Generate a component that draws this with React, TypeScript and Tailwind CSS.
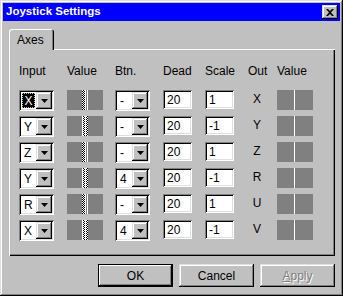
const rows = [
  { input: 'X', btn: '-', dead: '20', scale: '1', out: 'X', strip: 'a' },
  { input: 'Y', btn: '-', dead: '20', scale: '-1', out: 'Y', strip: 'b' },
  { input: 'Z', btn: '-', dead: '20', scale: '1', out: 'Z', strip: 'a' },
  { input: 'Y', btn: '4', dead: '20', scale: '-1', out: 'R', strip: 'b' },
  { input: 'R', btn: '-', dead: '20', scale: '1', out: 'U', strip: 'a' },
  { input: 'X', btn: '4', dead: '20', scale: '-1', out: 'V', strip: 'b' },
]

const sunken =
  'shadow-[inset_1px_1px_0_#808080,inset_-1px_-1px_0_#fff,inset_2px_2px_0_#000,inset_-2px_-2px_0_#dfdfdf]'
const raised =
  'shadow-[inset_-1px_-1px_0_#000,inset_1px_1px_0_#dfdfdf,inset_-2px_-2px_0_#808080,inset_2px_2px_0_#fff]'

const Arrow = () => (
  <svg width="7" height="4" viewBox="0 0 7 4">
    <path d="M0 0h7L3.5 4z" fill="#000" />
  </svg>
)

const Combo = ({ value, selected }: { value: string; selected?: boolean }) => (
  <div className={`flex h-[21px] w-[35px] items-stretch bg-white p-[2px] ${sunken}`}>
    <div className="flex flex-1 items-center pl-[1px]">
      {selected ? (
        <span className="flex h-[15px] w-[13px] items-center justify-center bg-black text-white outline-1 -outline-offset-1 outline-dotted outline-[#c0c0c0]">
          {value}
        </span>
      ) : (
        <span className="pl-[2px]">{value}</span>
      )}
    </div>
    <div className={`flex w-[16px] items-center justify-center bg-[#c0c0c0] ${raised}`}>
      <Arrow />
    </div>
  </div>
)

const Edit = ({ value }: { value: string }) => (
  <div className={`flex h-[19px] w-[29px] items-center bg-white pl-[4px] ${sunken}`}>{value}</div>
)

// dithered position marker in the middle of the input value bar
const Strip = ({ kind }: { kind: string }) => (
  <svg width="8" height="20" className="absolute left-[14px] top-0">
    <defs>
      <pattern id="dither" width="2" height="2" patternUnits="userSpaceOnUse">
        <rect width="2" height="2" fill="#fff" />
        <rect width="1" height="1" fill="#000" />
        <rect x="1" y="1" width="1" height="1" fill="#000" />
      </pattern>
    </defs>
    {kind === 'a' ? (
      <>
        <rect x="1" width="3" height="20" fill="url(#dither)" />
        <rect x="4" width="1" height="20" fill="#fff" />
        <rect x="6" width="1" height="20" fill="#fff" />
      </>
    ) : (
      <>
        <rect x="1" width="1" height="20" fill="#fff" />
        <rect x="2" width="2" height="20" fill="url(#dither)" />
        <rect x="4" width="1" height="20" fill="#fff" />
        <rect x="5" width="2" height="20" fill="url(#dither)" />
      </>
    )}
  </svg>
)

export default function App() {
  return (
    <div
      className={`flex h-[296px] w-[343px] flex-col bg-[#c0c0c0] p-[3px] text-[12px] leading-none text-black ${raised}`}
      style={{ fontFamily: '"Liberation Sans", Arial, sans-serif' }}
    >
      <div className="flex h-[18px] items-center justify-between bg-[#0000ff] pl-[3px] pr-[2px]">
        <span className="text-[11.5px] font-bold text-white">Joystick Settings</span>
        <div className={`flex h-[14px] w-[16px] items-center justify-center bg-[#c0c0c0] ${raised}`}>
          <svg width="8" height="7" viewBox="0 0 8 7">
            <path d="M0 0h2l2 2 2-2h2L5 3.5 8 7H6L4 5 2 7H0l3-3.5z" fill="#000" />
          </svg>
        </div>
      </div>

      <div className="pl-[6px] pt-[8px]">
        <div className="relative z-10 -mb-[1px] flex h-[21px] w-[45px] items-center rounded-t-[3px] bg-[#c0c0c0] pl-[8px] shadow-[inset_1px_1px_0_#fff,inset_-1px_0_0_#000,inset_-2px_0_0_#808080]">
          Axes
        </div>
        <div className="h-[207px] w-[326px] pl-[10px] pt-[15px] shadow-[inset_1px_1px_0_#fff,inset_-1px_-1px_0_#000,inset_-2px_-2px_0_#808080]">
          <div className="grid grid-cols-[48px_48px_48px_42px_43px_29px_36px] gap-y-[5px]">
            <div className="mb-[7px] h-[14px] leading-[14px]">Input</div>
            <div className="leading-[14px]">Value</div>
            <div className="leading-[14px]">Btn.</div>
            <div className="leading-[14px]">Dead</div>
            <div className="leading-[14px]">Scale</div>
            <div className="w-[18px] text-center leading-[14px]">Out</div>
            <div className="leading-[14px]">Value</div>
            {rows.map((r, i) => (
              <div key={i} className="contents">
                <Combo value={r.input} selected={i === 0} />
                <div className="relative h-[20px] w-[36px] bg-[#808080]">
                  <Strip kind={r.strip} />
                </div>
                <Combo value={r.btn} />
                <Edit value={r.dead} />
                <Edit value={r.scale} />
                <div className="w-[18px] pt-[3px] text-center">{r.out}</div>
                <div className="flex h-[20px] w-[36px] bg-[#808080] pl-[17px]">
                  <div className="w-[1px] bg-white" />
                </div>
              </div>
            ))}
          </div>
        </div>
      </div>

      <div className="mt-[8px] flex justify-end gap-[6px] pr-[5px]">
        <div className="flex h-[23px] w-[75px] items-center justify-center border border-black bg-[#c0c0c0] shadow-[inset_-1px_-1px_0_#000,inset_1px_1px_0_#fff,inset_-2px_-2px_0_#808080]">
          OK
        </div>
        <div className={`flex h-[23px] w-[75px] items-center justify-center bg-[#c0c0c0] ${raised}`}>Cancel</div>
        <div className={`flex h-[23px] w-[75px] items-center justify-center bg-[#c0c0c0] text-[#808080] [text-shadow:1px_1px_0_#fff] ${raised}`}>
          <span>
            <span className="underline">A</span>pply
          </span>
        </div>
      </div>
    </div>
  )
}
